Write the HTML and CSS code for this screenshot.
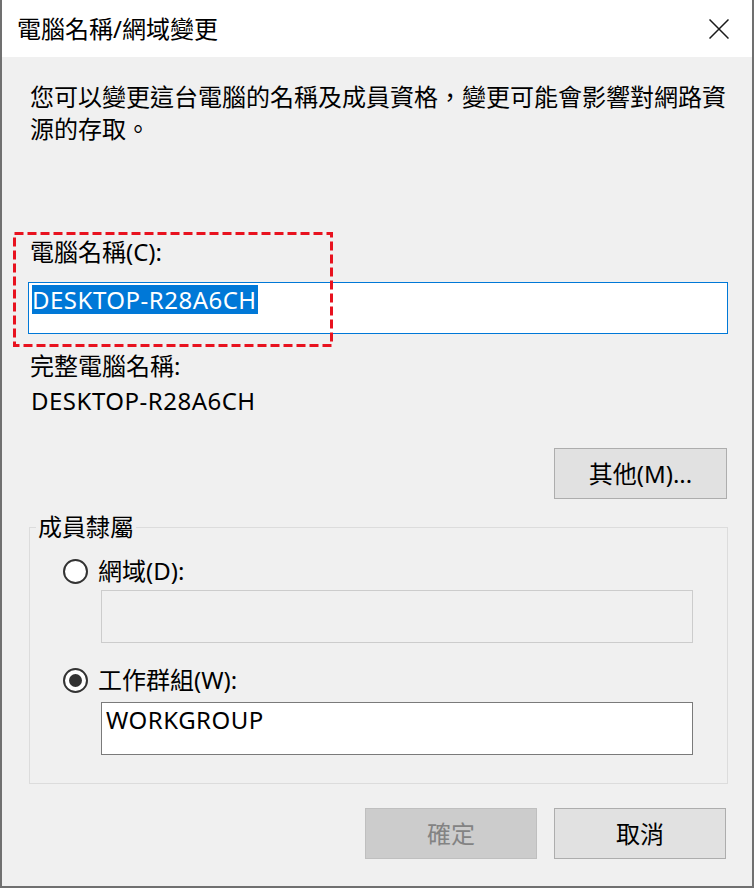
FILE: index.html
```html
<!DOCTYPE html>
<html lang="zh-Hant">
<head>
<meta charset="utf-8">
<title>電腦名稱/網域變更</title>
<link rel="stylesheet" href="styles.css">
</head>
<body>
<div class="window">
  <div class="titlebar">
    <span class="title">電腦名稱/網域變更</span>
    <span class="close" aria-label="關閉">
      <svg width="20" height="20" viewBox="0 0 20 20"><path d="M0.5 0.5 L19.5 19.5 M19.5 0.5 L0.5 19.5" stroke="#1a1a1a" stroke-width="1.5" fill="none"/></svg>
    </span>
  </div>
  <div class="content">
    <p class="desc">您可以變更這台電腦的名稱及成員資格，變更可能會影響對網路資源的存取。</p>

    <div class="name-section">
      <div class="label">電腦名稱(C):</div>
      <div class="input focused"><span class="selected latin">DESKTOP-R28A6CH</span></div>
      <svg class="highlight-box" width="320" height="115" viewBox="0 0 320 115"><rect x="1.5" y="1.5" width="317" height="112" fill="none" stroke="#e8121f" stroke-width="3" stroke-dasharray="9 4"/></svg>
    </div>

    <div class="label full-label">完整電腦名稱:</div>
    <div class="label full-value latin">DESKTOP-R28A6CH</div>

    <div class="more-row"><span class="btn">其他(M)...</span></div>

    <fieldset class="group">
      <legend>成員隸屬</legend>
      <div class="radio-row"><span class="radio"></span><span class="radio-label">網域(D):</span></div>
      <div class="input sub disabled"></div>
      <div class="radio-row second"><span class="radio checked"></span><span class="radio-label">工作群組(W):</span></div>
      <div class="input sub wg latin">WORKGROUP</div>
    </fieldset>

    <div class="actions">
      <span class="btn disabled">確定</span>
      <span class="btn">取消</span>
    </div>
  </div>
</div>
</body>
</html>
```

FILE: styles.css
```css
html, body {
  margin: 0;
  padding: 0;
  width: 754px;
  height: 888px;
  overflow: hidden;
  background: #f0f0f0;
}
body {
  font-family: "Noto Sans", "Noto Sans CJK TC", sans-serif;
  font-size: 24px;
  color: #000;
}
.window {
  box-sizing: border-box;
  width: 754px;
  height: 888px;
  border-left: 2px solid #707070;
  border-right: 2px solid #707070;
  border-bottom: 2px solid #707070;
  background: #f0f0f0;
  display: flex;
  flex-direction: column;
}
.titlebar {
  height: 57px;
  background: #fff;
  display: flex;
  align-items: center;
  justify-content: space-between;
  padding: 0 23px 0 15px;
  flex: none;
}
.title {
  line-height: 32px;
}
.close {
  display: flex;
  width: 20px;
  height: 20px;
}
.content {
  padding: 0 24px 0 26px;
  display: flex;
  flex-direction: column;
}
.desc {
  margin: 24px 0 0 2px;
  line-height: 32px;
  width: 698px;
}
.latin {
  letter-spacing: 0.5px;
}
.label {
  line-height: 32px;
  padding-left: 2px;
}
.name-section {
  position: relative;
  margin-top: 91px;
}
.input {
  box-sizing: border-box;
  background: #fff;
  border: 1px solid #7a7a7a;
  padding: 2px 4px;
  line-height: 29px;
  height: 52px;
}
.input.focused {
  margin-top: 14px;
  border-color: #0078d7;
  padding-left: 3px;
}
.selected {
  display: inline-block;
  background: #0078d7;
  color: #fff;
  padding-right: 1px;
}
.highlight-box {
  position: absolute;
  left: -15px;
  top: -4px;
}
.full-label {
  margin-top: 16px;
}
.full-value {
  margin-top: 3px;
  padding-left: 3px;
}
.more-row {
  display: flex;
  justify-content: flex-end;
  margin-top: 31px;
  padding-right: 1px;
}
.btn {
  box-sizing: border-box;
  width: 173px;
  height: 51px;
  background: #e1e1e1;
  border: 1px solid #adadad;
  display: flex;
  align-items: center;
  justify-content: center;
  line-height: 32px;
}
.btn.disabled {
  background: #cccccc;
  border-color: #bfbfbf;
  color: #838383;
}
.group {
  margin: 12px 0 0 1px;
  padding: 12px 34px 28px 33px;
  border: 1px solid #dcdcdc;
  min-width: 0;
}
.group legend {
  margin-left: -27px;
  padding: 0 2px;
  line-height: 32px;
}
.radio-row {
  display: flex;
  align-items: center;
  height: 32px;
}
.radio-row.second {
  margin-top: 21px;
}
.radio {
  box-sizing: border-box;
  width: 25px;
  height: 25px;
  border: 2px solid #333;
  border-radius: 50%;
  background: #fff;
  display: flex;
  align-items: center;
  justify-content: center;
  flex: none;
}
.radio.checked::after {
  content: "";
  width: 13px;
  height: 13px;
  border-radius: 50%;
  background: #333;
}
.radio-label {
  margin-left: 10px;
  line-height: 32px;
}
.input.sub {
  margin-left: 38px;
  height: 53px;
}
.input.disabled {
  margin-top: 3px;
  background: #f0f0f0;
  border-color: #cccccc;
}
.input.wg {
  margin-top: 6px;
}
.actions {
  display: flex;
  justify-content: flex-end;
  gap: 17px;
  margin-top: 24px;
  padding-right: 2px;
}
.actions .btn {
  width: 172px;
}
```
